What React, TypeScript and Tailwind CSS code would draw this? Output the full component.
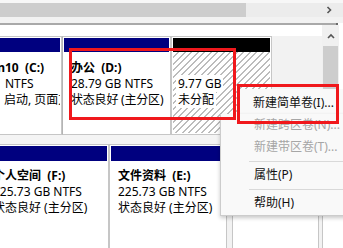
import type { ReactNode } from 'react';

function Part({ className, head, body, children }: { className: string; head: string; body?: string; children?: ReactNode }) {
  return (
    <div className={`flex shrink-0 flex-col border border-[#c6c6c6] bg-white p-px ${className}`}>
      <div className={head} />
      <div className={`flex-1 overflow-hidden whitespace-nowrap leading-[16px] ${body ?? ''}`}>{children}</div>
    </div>
  );
}

function MenuItem({ label, disabled }: { label: string; disabled?: boolean }) {
  return (
    <div className={`flex h-[22px] items-center pl-[33px] ${disabled ? 'text-[#a6a6a6]' : 'text-[#111]'}`}>{label}</div>
  );
}

export default function App() {
  return (
    <div className="relative h-[248px] w-[343px] overflow-hidden bg-white font-['Noto_Sans','Noto_Sans_CJK_SC',sans-serif] text-[12px] text-black">
      {/* top scroll bar */}
      <div className="h-[3px] bg-[#f7f7f7]" />
      <div className="flex h-[14px]">
        <div className="w-[246px] bg-[#cdcdcd]" />
        <div className="flex flex-1 items-center justify-end bg-[#ececec] pr-[11px]">
          <svg width="6" height="8" viewBox="0 0 6 8">
            <path d="M1.5 1 L4.5 4 L1.5 7" fill="none" stroke="#555" strokeWidth="1.6" />
          </svg>
        </div>
      </div>
      <div className="h-[6px] bg-[#f2f2f2]" />
      <div className="flex h-[2px]">
        <div className="w-[336px] bg-[#a9a9a9]" />
        <div className="w-[2px] bg-[#6a6a6a]" />
      </div>

      {/* disk row 1 */}
      <div className="flex h-[110px]">
        <div className="flex w-[322px] flex-col pt-[11px]">
          <div className="flex h-[99px]">
            <Part className="w-[62px] border-l-0 pl-0" head="h-[14px] bg-[#00007f]" body="pt-[8px]">
              <div className="-ml-[18px] whitespace-pre font-bold">Win10  (C:)</div>
              <div className="ml-[5px]">NTFS</div>
              <div className="ml-[4px]">启动, 页面文件, 故障转储, 主分区)</div>
            </Part>
            <Part className="w-[109px] border-l-[#b4b4b4]" head="h-[14px] bg-[#00007f]" body="pl-[7px] pt-[8px]">
              <div className="whitespace-pre font-bold">办公  (D:)</div>
              <div>28.79 GB NTFS</div>
              <div className="tracking-[-0.2px]">状态良好 (主分区)</div>
            </Part>
            <Part
              className="w-[101px]"
              head="h-[14px] bg-black"
              body="bg-[image:repeating-linear-gradient(135deg,#ffffff_0px,#ffffff_3.4px,#bcbcbc_3.4px,#bcbcbc_4.6px)] pl-[3px] pt-[24px]"
            >
              <div><span className="bg-white px-[2px]">9.77 GB</span></div>
              <div><span className="bg-white px-[2px]">未分配</span></div>
            </Part>
            <div className="flex-1 bg-[#f2f2f2]" />
          </div>
        </div>
        <div className="flex w-[17px] flex-col bg-[#f0f0f0]">
          <div className="flex h-[21px] items-center justify-center">
            <svg width="8" height="6" viewBox="0 0 8 6">
              <path d="M1 5 L4 2 L7 5" fill="none" stroke="#555" strokeWidth="1.6" />
            </svg>
          </div>
          <div className="mx-px flex-1 bg-[#cdcdcd]" />
        </div>
        <div className="flex-1 bg-white" />
      </div>

      <div className="h-[9px] bg-[#f4f4f4]" />

      {/* disk row 2 */}
      <div className="flex h-[110px]">
        <Part className="w-[109px] border-l-0 pl-0" head="h-[15px] bg-[#00007f]" body="pt-[7px]">
          <div className="-ml-[7px]">
            <div className="whitespace-pre font-bold">个人空间  (F:)</div>
            <div>225.73 GB NTFS</div>
            <div>状态良好 (主分区)</div>
          </div>
        </Part>
        <Part className="w-[118px]" head="h-[15px] bg-[#00007f]" body="pl-[7px] pt-[7px]">
          <div className="whitespace-pre font-bold">文件资料  (E:)</div>
          <div>225.73 GB NTFS</div>
          <div>状态良好 (主分区)</div>
        </Part>
        <div className="w-[5px] shrink-0 bg-[#f2f2f2]" />
        <Part className="w-[87px]" head="h-[15px] bg-[#00007f]" />
        <div className="w-[3px] shrink-0 bg-[#f2f2f2]" />
        <Part className="flex-1 border-r-0" head="h-[15px] bg-[#00007f]" />
      </div>

      {/* context menu */}
      <div className="absolute left-[220px] top-[89px] flex w-[140px] flex-col">
        <div className="ml-[17px] bg-[#f9f9f9] pt-[3px]">
          <div className="-ml-[17px]">
            <MenuItem label="新建简单卷(I)..." />
          </div>
        </div>
        <div className="border-b border-l border-[#cccccc] bg-[#f9f9f9] pb-px shadow-[0_2px_4px_rgba(0,0,0,0.22)]">
          <MenuItem label="新建跨区卷(N)..." disabled />
          <MenuItem label="新建带区卷(T)..." disabled />
          <div className="flex h-[6px] items-center pl-[28px]">
            <div className="h-px flex-1 bg-[#d9d9d9]" />
          </div>
          <MenuItem label="属性(P)" />
          <div className="flex h-[6px] items-center pl-[28px]">
            <div className="h-px flex-1 bg-[#d9d9d9]" />
          </div>
          <MenuItem label="帮助(H)" />
        </div>
      </div>

      {/* highlight frames */}
      <div className="absolute left-[69px] top-[48px] h-[72px] w-[167px] border-[3px] border-[#f0181c]" />
      <div className="absolute left-[237px] top-[84px] h-[40px] w-[102px] border-[3px] border-[#f0181c]" />
    </div>
  );
}
